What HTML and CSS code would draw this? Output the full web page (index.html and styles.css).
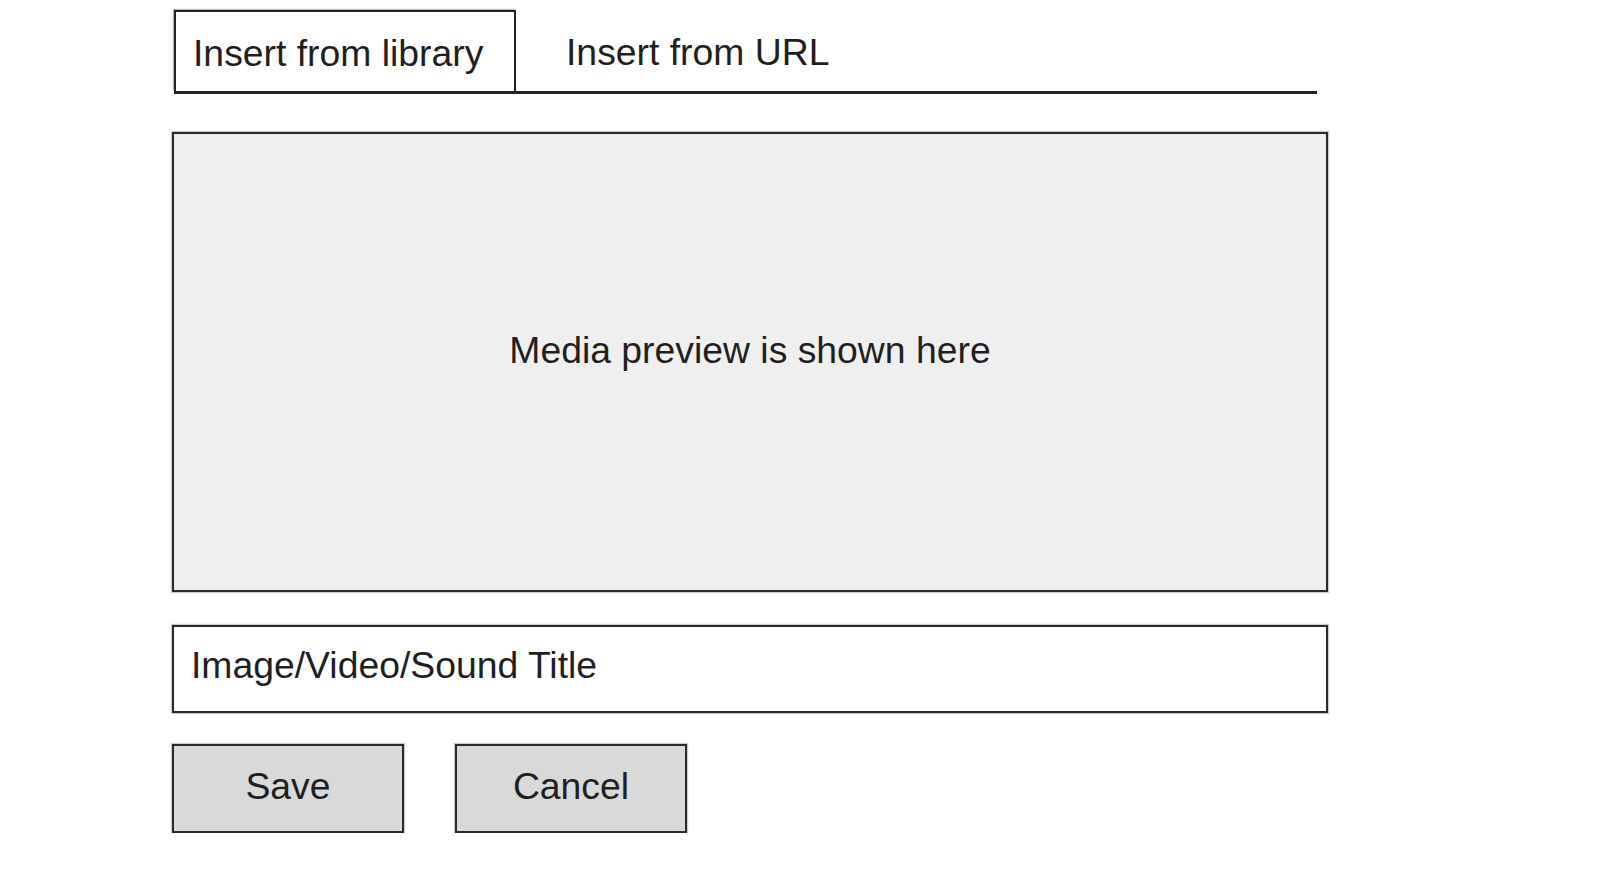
FILE: index.html
```html
<!DOCTYPE html>
<html>
<head>
<meta charset="utf-8">
<link rel="stylesheet" href="styles.css">
</head>
<body>
<div class="page">
  <div class="tabs">
    <div class="tab active">Insert from library</div>
    <div class="tab">Insert from URL</div>
  </div>
  <div class="preview">Media preview is shown here</div>
  <div class="title-field">Image/Video/Sound Title</div>
  <div class="actions">
    <div class="btn">Save</div>
    <div class="btn">Cancel</div>
  </div>
</div>
</body>
</html>
```
FILE: styles.css
```css
html, body {
  margin: 0;
  padding: 0;
  background: #ffffff;
}
body {
  font-family: "Liberation Sans", Arial, sans-serif;
  font-size: 28pt;
  color: #1f1f1f;
}
.page {
  padding-left: 172px;
  padding-top: 10px;
  display: flex;
  flex-direction: column;
  align-items: flex-start;
}
.tabs {
  display: flex;
  align-items: stretch;
  width: 1143px;
  margin-left: 2px;
  border-bottom: 3px solid #222;
}
.tab {
  height: 81px;
  display: flex;
  align-items: center;
  box-sizing: border-box;
  padding-top: 4px;
}
.tab.active {
  width: 342px;
  border: 2px solid #222;
  border-bottom: none;
  padding-left: 17px;
  background: #fff;
  box-shadow: -1px -1px 1px rgba(0,0,0,0.25);
}
.tab:not(.active) {
  padding-left: 50px;
}
.preview {
  margin-top: 38px;
  width: 1156px;
  height: 460px;
  box-sizing: border-box;
  background: #efefef;
  border: 2px solid #2a2a2a;
  box-shadow: 0 0 1px 1px rgba(0,0,0,0.2);
  display: flex;
  align-items: center;
  justify-content: center;
  padding-bottom: 24px;
}
.title-field {
  margin-top: 33px;
  width: 1156px;
  height: 88px;
  box-sizing: border-box;
  background: #fff;
  border: 2px solid #2a2a2a;
  box-shadow: 0 0 1px 1px rgba(0,0,0,0.2);
  display: flex;
  align-items: center;
  padding-left: 17px;
  padding-bottom: 8px;
}
.actions {
  margin-top: 31px;
  display: flex;
  gap: 51px;
}
.btn {
  width: 232px;
  height: 89px;
  box-sizing: border-box;
  background: #d9d9d9;
  border: 2px solid #2a2a2a;
  box-shadow: 0 0 1px 1px rgba(0,0,0,0.2);
  display: flex;
  align-items: center;
  justify-content: center;
  padding-bottom: 4px;
}
```
